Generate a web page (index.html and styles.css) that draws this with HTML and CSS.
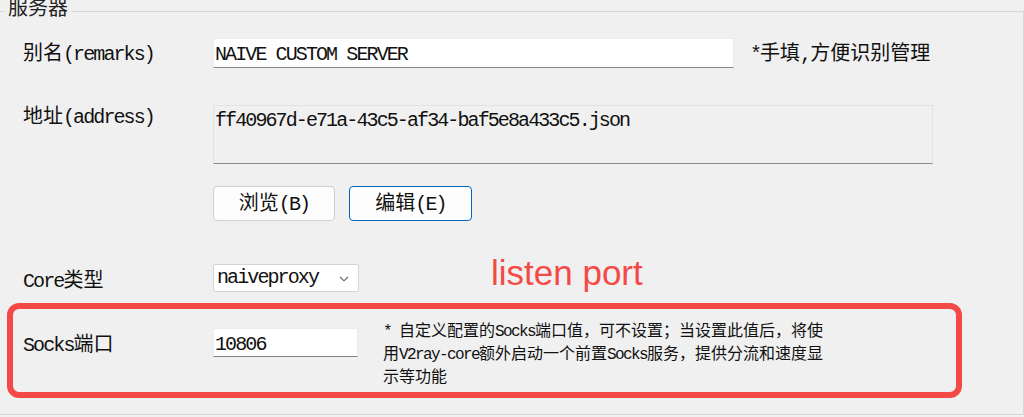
FILE: index.html
```html
<!DOCTYPE html>
<html lang="zh-CN">
<head>
<meta charset="utf-8">
<title>服务器</title>
<link rel="stylesheet" href="styles.css">
</head>
<body>
<div class="group">
  <div class="group-title">服务器</div>

  <div class="row row-remarks">
    <div class="label">别名<span class="lat">(remarks)</span></div>
    <div class="textbox remarks"><span class="lat">NAIVE CUSTOM SERVER</span></div>
    <div class="hint"><span class="lat">*</span>手填<span class="lat">,</span>方便识别管理</div>
  </div>

  <div class="row row-address">
    <div class="label">地址<span class="lat">(address)</span></div>
    <div class="textarea"><span class="lat">ff40967d-e71a-43c5-af34-baf5e8a433c5.json</span></div>
  </div>

  <div class="row row-buttons">
    <button class="btn">浏览<span class="lat">(B)</span></button>
    <button class="btn btn-primary">编辑<span class="lat">(E)</span></button>
  </div>

  <div class="row row-core">
    <div class="label label-core"><span class="lat">Core</span>类型</div>
    <div class="select">
      <span class="lat">naiveproxy</span>
      <svg class="chevron" width="10" height="6" viewBox="0 0 10 6"><path d="M1 0.8 L5 4.8 L9 0.8" fill="none" stroke="#5a5a5a" stroke-width="1.1"/></svg>
    </div>
    <div class="annotation">listen port</div>
  </div>

  <div class="socks-box">
    <div class="label label-socks"><span class="lat">Socks</span>端口</div>
    <div class="textbox socks"><span class="lat">10806</span></div>
    <div class="desc"><span class="lat">* </span>自定义配置的<span class="lat">Socks</span>端口值，可不设置；当设置此值后，将使用<span class="lat">V2ray-core</span>额外启动一个前置<span class="lat">Socks</span>服务，提供分流和速度显示等功能</div>
  </div>
</div>
</body>
</html>
```

FILE: styles.css
```css
* {
  box-sizing: border-box;
}

html,
body {
  margin: 0;
  background: #f0f0f0;
}

body {
  width: 1024px;
  height: 417px;
  overflow: hidden;
  font-family: "Noto Sans CJK SC", sans-serif;
  font-size: 20px;
  line-height: 20px;
  color: #111;
}

.lat {
  font-family: "Liberation Mono", "DejaVu Sans Mono", monospace;
  letter-spacing: -1.9px;
}

.group {
  position: relative;
  margin-top: 11px;
  height: 404px;
  border: 1px solid #d9d9d9;
  border-left: none;
}

.group-title {
  position: absolute;
  left: 5px;
  top: -15px;
  padding: 0 3px;
  background: #f0f0f0;
  line-height: 20px;
  color: #222;
}

.row {
  display: flex;
  padding-left: 23px;
}

.label {
  width: 190px;
  flex: none;
}

.textbox {
  flex: none;
  background: #fff;
  border: 1px solid #ececec;
  border-bottom-color: #868686;
  padding: 0 1px;
}

.row-remarks {
  margin-top: 26px;
  align-items: center;
}

.remarks {
  width: 521px;
  height: 30px;
  line-height: 26px;
}

.hint {
  margin-left: 16px;
}

.row-address {
  margin-top: 37px;
}

.textarea {
  width: 720px;
  height: 59px;
  border: 1px solid #e2e2e2;
  border-bottom-color: #8a8a8a;
  padding: 2px 1px;
  line-height: 20px;
  background: #f0f0f0;
}

.row-buttons {
  margin-top: 22px;
  padding-left: 213px;
  gap: 14px;
}

.btn {
  width: 122px;
  height: 35px;
  padding: 0;
  background: #fdfdfd;
  border: 1px solid #d0d0d0;
  border-radius: 4px;
  font: inherit;
  line-height: 20px;
  color: #111;
}

.btn-primary {
  width: 123px;
  border-color: #0067c0;
}

.row-core {
  margin-top: 43px;
  align-items: center;
}

.label-core {
  margin-top: 4px;
}

.select {
  flex: none;
  width: 146px;
  height: 28px;
  display: flex;
  align-items: center;
  justify-content: space-between;
  padding: 0 9px 0 3px;
  background: #fff;
  border: 1px solid #d4d4d4;
  border-radius: 2px;
}

.chevron {
  margin-top: 1px;
}

.annotation {
  align-self: flex-start;
  margin: -9px 0 0 132px;
  font-family: "Liberation Sans", Arial, sans-serif;
  font-size: 35px;
  line-height: 35px;
  color: #f44a47;
}

.socks-box {
  display: flex;
  align-items: flex-start;
  margin: 11px 0 0 7px;
  width: 955px;
  height: 95px;
  padding-left: 10px;
  border: 6px solid #f44a47;
  border-radius: 12px;
}

.label-socks {
  margin-top: 24px;
}

.socks {
  width: 145px;
  height: 29px;
  margin-top: 19px;
  line-height: 26px;
}

.desc {
  width: 448px;
  margin: 10px 0 0 25px;
  font-size: 16px;
  line-height: 20px;
}

.desc .lat {
  letter-spacing: -1.6px;
}
```
